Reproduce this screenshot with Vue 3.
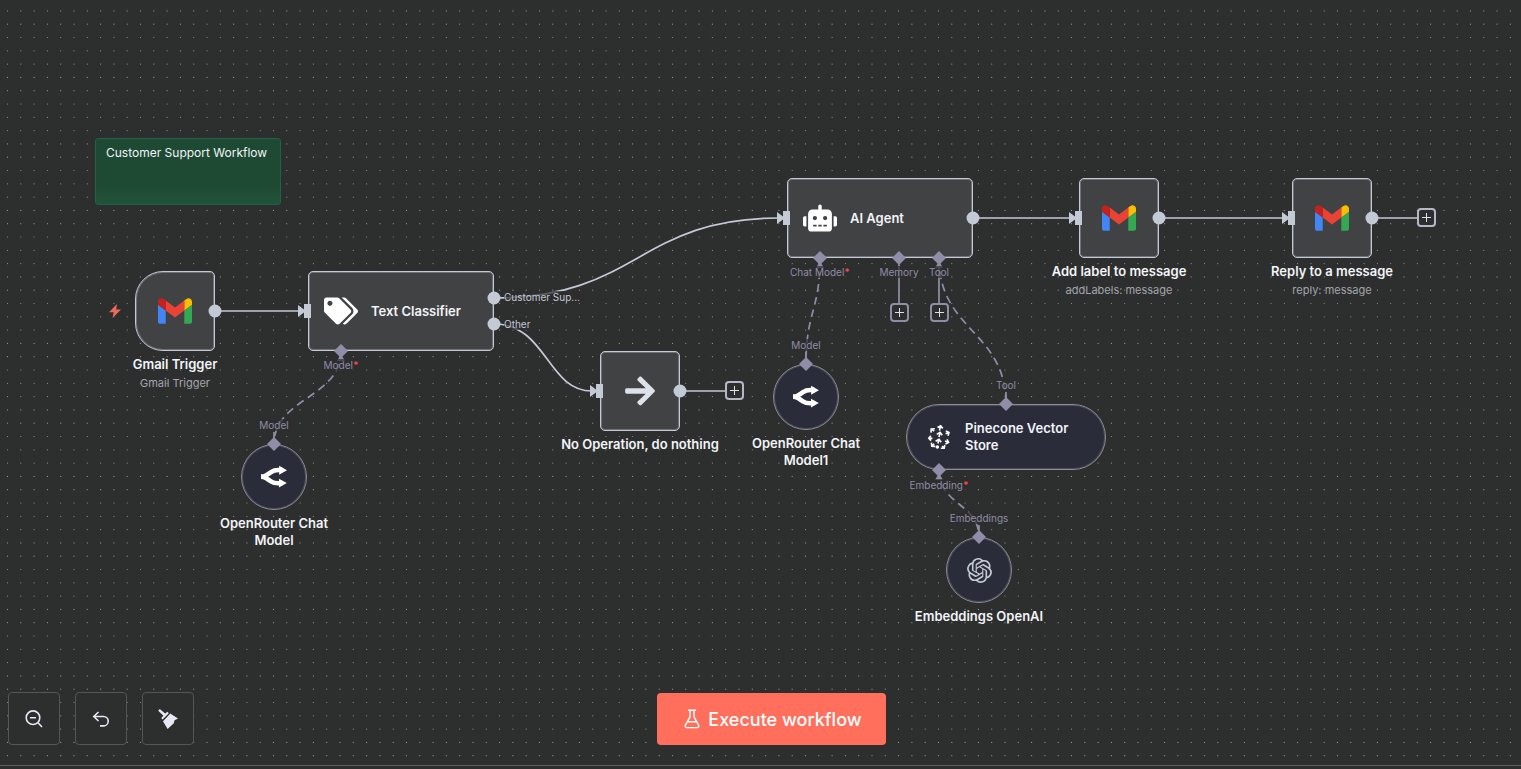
<script setup>
const nodes = [
  { id: 'gmail-trigger', x: 135, y: 271, kind: 'main trigger', icon: 'gmail', title: 'Gmail Trigger', sub: 'Gmail Trigger' },
  { id: 'noop', x: 600, y: 351, kind: 'main', icon: 'arrow', title: 'No Operation, do nothing' },
  { id: 'add-label', x: 1079, y: 178, kind: 'main', icon: 'gmail', title: 'Add label to message', sub: 'addLabels: message' },
  { id: 'reply', x: 1292, y: 178, kind: 'main', icon: 'gmail', title: 'Reply to a message', sub: 'reply: message' },
  { id: 'classifier', x: 308, y: 271, kind: 'main wide', icon: 'tags', title: 'Text Classifier', inside: true },
  { id: 'agent', x: 787, y: 178, kind: 'main wide', icon: 'robot', title: 'AI Agent', inside: true },
  { id: 'router', x: 241, y: 444, kind: 'round', icon: 'router', title: 'OpenRouter Chat Model' },
  { id: 'router1', x: 773, y: 364, kind: 'round', icon: 'router', title: 'OpenRouter Chat Model1' },
  { id: 'pinecone', x: 906, y: 404, kind: 'pill', icon: 'pinecone', title: 'Pinecone Vector Store', inside: true },
  { id: 'embeddings', x: 946, y: 537, kind: 'round', icon: 'openai', title: 'Embeddings OpenAI' },
]

const edges = [
  'M215 311H300',
  'M494 298C638 298 638 218 779 218',
  'M494 324C547 324 547 391 592 391',
  'M973 218H1071',
  'M1159 218H1284',
  'M680 391H726',
  'M1372 218H1417',
]
const dashed = [
  'M341 351C341 398 274 398 274 444',
  'M820 258C820 311 806 311 806 364',
  'M939 258C939 331 1006 331 1006 404',
  'M939 471C939 504 979 504 979 537',
]
const stems = ['M899 258V303', 'M939 258V303', 'M274 432V444', 'M806 352V364', 'M1006 392V404', 'M979 525V537']
const outputs = [[215, 311], [494, 298], [494, 324], [680, 391], [973, 218], [1159, 218], [1372, 218]]
const inputs = [[308, 311], [600, 391], [787, 218], [1079, 218], [1292, 218]]
const diamonds = [[341, 351], [274, 444], [820, 258], [899, 258], [939, 258], [806, 364], [1006, 404], [939, 470], [979, 537]]
const caps = [[341, 351], [820, 258], [939, 258], [939, 470]]

const labels = [
  { x: 341, y: 365, text: 'Model', required: true },
  { x: 274, y: 425, text: 'Model' },
  { x: 820, y: 272, text: 'Chat Model', required: true },
  { x: 899, y: 272, text: 'Memory' },
  { x: 939, y: 272, text: 'Tool' },
  { x: 806, y: 345, text: 'Model' },
  { x: 1006, y: 385, text: 'Tool' },
  { x: 939, y: 485, text: 'Embedding', required: true },
  { x: 979, y: 518, text: 'Embeddings' },
]
const branches = [
  { x: 504, y: 297, text: 'Customer Sup...' },
  { x: 504, y: 324, text: 'Other' },
]
const adders = [
  { x: 725, y: 381, name: 'Add after No Operation' },
  { x: 1417, y: 208, name: 'Add after Reply' },
  { x: 890, y: 303, name: 'Add memory', muted: true },
  { x: 930, y: 303, name: 'Add tool', muted: true },
]
const steps = [...Array(10).keys()]
const at = (p) => ({ left: p.x + 'px', top: p.y + 'px' })
</script>

<template>
  <div class="page">
    <main class="canvas">
      <svg class="layer" aria-hidden="true">
        <defs>
          <pattern id="dots" width="133" height="133" patternUnits="userSpaceOnUse">
            <template v-for="r in steps" :key="r">
              <circle v-for="c in steps" :key="c" :cx="7.5 + 13.3 * c" :cy="10.9 + 13.3 * r" r="0.6" fill="#8e9093" />
            </template>
          </pattern>
        </defs>
        <rect width="100%" height="100%" fill="url(#dots)" />
      </svg>

      <section class="sticky"><p>Customer Support Workflow</p></section>

      <svg class="layer" aria-hidden="true">
        <g class="edge">
          <path v-for="d in edges" :key="d" :d="d" />
        </g>
        <g class="edge muted">
          <path v-for="d in dashed" :key="d" class="dash" :d="d" />
          <path v-for="d in stems" :key="d" :d="d" />
        </g>
      </svg>

      <svg class="bolt" viewBox="0 0 12 14" aria-hidden="true"><path d="M8 0L0 8.200h4.600L3.600 14L12 5.400H7.200z" /></svg>

      <article v-for="n in nodes" :key="n.id" class="node" :class="n.kind" :style="at(n)">
        <div class="box">
          <svg v-if="n.icon === 'gmail'" class="i-gmail" viewBox="52 42 88 66">
            <path fill="#4285f4" d="M58 108h14V74L52 59v43c0 3.320 2.690 6 6 6" />
            <path fill="#34a853" d="M120 108h14c3.320 0 6-2.690 6-6V59l-20 15" />
            <path fill="#fbbc04" d="M120 48v26l20-15v-8c0-7.420-8.470-11.650-14.400-7.200" />
            <path fill="#ea4335" d="M72 74V48l24 18 24-18v26L96 92" />
            <path fill="#c5221f" d="M52 51v8l20 15V48l-5.600-4.200c-5.940-4.450-14.400-.22-14.400 7.200" />
          </svg>
          <svg v-else-if="n.icon === 'tags'" class="i-wide" viewBox="0 0 640 512"><path d="M497.941 225.941L286.059 14.059A48 48 0 0 0 252.118 0H48C21.490 0 0 21.490 0 48v204.118a48 48 0 0 0 14.059 33.941l211.882 211.882c18.744 18.745 49.136 18.746 67.882 0l204.118-204.118c18.745-18.745 18.745-49.137 0-67.882zM112 160c-26.510 0-48-21.490-48-48s21.490-48 48-48 48 21.490 48 48-21.490 48-48 48zm513.941 133.823L421.823 497.941c-18.745 18.745-49.137 18.745-67.882 0l-.36-.36L527.640 323.522c16.999-16.999 26.360-39.600 26.360-63.640s-9.362-46.641-26.360-63.640L331.397 0h48.721a48 48 0 0 1 33.941 14.059l211.882 211.882c18.745 18.745 18.745 49.137 0 67.882z" /></svg>
          <svg v-else-if="n.icon === 'robot'" class="i-wide" viewBox="0 0 640 512"><path d="M32 224H64V416H32A32 32 0 0 1 0 384V256A32 32 0 0 1 32 224Zm512-48V448a64 64 0 0 1-64 64H160a64 64 0 0 1-64-64V176a80 80 0 0 1 80-80H288V32a32 32 0 0 1 64 0V96H464A80 80 0 0 1 544 176ZM264 256a40 40 0 1 0-40 40A40 40 0 0 0 264 256Zm-8 128H192v32h64Zm96 0H288v32h64ZM456 256a40 40 0 1 0-40 40A40 40 0 0 0 456 256Zm-8 128H384v32h64ZM640 256V384a32 32 0 0 1-32 32H576V224h32A32 32 0 0 1 640 256Z" /></svg>
          <svg v-else-if="n.icon === 'arrow'" class="i-arrow" viewBox="0 0 448 512"><path d="M190.500 66.900l22.200-22.200c9.400-9.400 24.600-9.400 33.900 0L441 239c9.400 9.400 9.400 24.600 0 33.900L246.600 467.300c-9.400 9.400-24.600 9.400-33.900 0l-22.200-22.200c-9.500-9.500-9.300-25 .4-34.300L311.400 296H24c-13.300 0-24-10.700-24-24v-32c0-13.300 10.700-24 24-24h287.400L190.900 101.200c-9.800-9.300-10-24.800-.4-34.300z" /></svg>
          <svg v-else-if="n.icon === 'router'" class="i-router" viewBox="0 0 512 512">
            <path class="line" d="M3 249C18 249 76 236 106 219C136 202 136 202 198 158C276 102 332 121 423 121M0 249C15 249 73 262 103 279C133 296 133 296 195 340C273 396 329 377 420 377" />
            <path d="M511 121.500L357 210V33ZM508 376.500L354 288V465Z" />
          </svg>
          <svg v-else-if="n.icon === 'pinecone'" class="i-pinecone" viewBox="0 0 22 24">
            <path d="M11.500 5.500L12.500 0.800M9.500 2.500L12.700 0.800L14.800 3.400M11 12L12 7.600M8.800 9.400L12.100 7.400L14.200 10.300M10 18.500L10.800 14.600M7.600 16.300L11 14.200L13.200 17.200M6.200 6.200L3.400 4.200M3 7.600L3.200 4L6.800 3.800M4.400 13.400L1 13.200M2.800 10.800L0.800 13.200L3 15.600M6.200 18.800L4 21M3.400 17.600L3.800 21.200L7.200 21.400M14.200 21L16 23M12.800 23.200L16.200 23.200L16.800 20M17 16L20.400 17.400M19 14.400L20.600 17.400L17.400 19M17.600 8.800L20.800 7.600M17.800 6L21 7.400L20 10.800" />
            <circle cx="9.300" cy="22" r="1" />
          </svg>
          <svg v-else class="i-openai" viewBox="0 0 24 24"><path d="M22.2819 9.8211a5.9847 5.9847 0 0 0-.5157-4.9108 6.0462 6.0462 0 0 0-6.5098-2.9A6.0651 6.0651 0 0 0 4.9807 4.1818a5.9847 5.9847 0 0 0-3.9977 2.9 6.0462 6.0462 0 0 0 .7427 7.0966 5.98 5.98 0 0 0 .511 4.9107 6.051 6.051 0 0 0 6.5146 2.9001A5.9847 5.9847 0 0 0 13.2599 24a6.0557 6.0557 0 0 0 5.7718-4.2058 5.9894 5.9894 0 0 0 3.9977-2.9001 6.0557 6.0557 0 0 0-.7475-7.0729zm-9.022 12.6081a4.4755 4.4755 0 0 1-2.8764-1.0408l.1419-.0804 4.7783-2.7582a.7948.7948 0 0 0 .3927-.6813v-6.7369l2.02 1.1686a.071.071 0 0 1 .038.052v5.5826a4.504 4.504 0 0 1-4.4945 4.4944zm-9.6607-4.1254a4.4708 4.4708 0 0 1-.5346-3.0137l.142.0852 4.783 2.7582a.7712.7712 0 0 0 .7806 0l5.8428-3.3685v2.3324a.0804.0804 0 0 1-.0332.0615L9.74 19.9502a4.4992 4.4992 0 0 1-6.1408-1.6464zM2.3408 7.8956a4.485 4.485 0 0 1 2.3655-1.9728V11.6a.7664.7664 0 0 0 .3879.6765l5.8144 3.3543-2.0201 1.1685a.0757.0757 0 0 1-.071 0l-4.8303-2.7865A4.504 4.504 0 0 1 2.3408 7.872zm16.5963 3.8558L13.1038 8.364 15.1192 7.2a.0757.0757 0 0 1 .071 0l4.8303 2.7913a4.4944 4.4944 0 0 1-.6765 8.1042v-5.6772a.79.79 0 0 0-.407-.667zm2.0107-3.0231l-.142-.0852-4.7735-2.7818a.7759.7759 0 0 0-.7854 0L9.409 9.2297V6.8974a.0662.0662 0 0 1 .0284-.0615l4.8303-2.7866a4.4992 4.4992 0 0 1 6.6802 4.66zM8.3065 12.863l-2.02-1.1638a.0804.0804 0 0 1-.038-.0567V6.0742a4.4992 4.4992 0 0 1 7.3757-3.4537l-.142.0805L8.704 5.459a.7948.7948 0 0 0-.3927.6813zm1.0976-2.3654l2.602-1.4998 2.6069 1.4998v2.9994l-2.5974 1.4997-2.6067-1.4997Z" /></svg>
          <h2 v-if="n.inside" class="title">{{ n.title }}</h2>
        </div>
        <h2 v-if="!n.inside" class="title">{{ n.title }}</h2>
        <p v-if="n.sub" class="sub">{{ n.sub }}</p>
      </article>

      <svg class="layer" aria-hidden="true">
        <g class="port">
          <circle v-for="p in outputs" :key="p.join()" :cx="p[0]" :cy="p[1]" r="6.500" />
          <template v-for="p in inputs" :key="p.join()">
            <rect :x="p[0] - 4" :y="p[1] - 7" width="7" height="14" />
            <path :d="`M${p[0] - 10} ${p[1] - 6}l8 6l-8 6z`" />
          </template>
        </g>
        <g class="port muted">
          <path v-for="p in diamonds" :key="p.join()" :d="`M${p[0]} ${p[1] - 7}l7 7l-7 7l-7-7z`" />
          <path v-for="p in caps" :key="'c' + p.join()" :d="`M${p[0]} ${p[1] + 3}l4 7h-8z`" />
        </g>
      </svg>

      <span v-for="l in labels" :key="l.x + '-' + l.y" class="label" :style="at(l)">{{ l.text }}<b v-if="l.required">*</b></span>
      <span v-for="l in branches" :key="l.text" class="label branch" :style="at(l)">{{ l.text }}</span>

      <button v-for="a in adders" :key="a.name" class="add" :class="{ muted: a.muted }" :aria-label="a.name" :style="at(a)">
        <svg viewBox="0 0 9 9"><path d="M4.500 0v9M0 4.500h9" /></svg>
      </button>

      <nav class="controls">
        <button aria-label="Zoom out">
          <svg viewBox="0 0 20 20"><circle cx="9" cy="8.700" r="6.800" /><path d="M14 13.700L18 18M6 8.700h6" /></svg>
        </button>
        <button aria-label="Undo">
          <svg viewBox="0 0 20 20"><path d="M7.500 3L2.800 7.500L7.500 12M3 7.500H12.500a4.700 4.700 0 0 1 0 9.400H9" /></svg>
        </button>
        <button aria-label="Tidy up">
          <svg class="solid" viewBox="0 0 20 20"><path d="M0.200 1.800L1.800 0L7.200 4.600L9.400 2.800L10.800 4.200L4.600 10.400L3.200 9L5.400 6.800ZM12.200 4.600L20 9.400L16.600 11.200L15.600 14.400L9.600 20L7.200 16L5 12.200L11.400 5.400Z" /></svg>
        </button>
      </nav>

      <div class="run">
        <button>
          <svg viewBox="0 0 16 20"><path d="M4 1.200h8M6 1.200v6.600L1.400 16.200a1.600 1.600 0 0 0 1.400 2.400h10.400a1.600 1.600 0 0 0 1.400-2.400L10 7.800V1.200M3.600 12.800h8.800" /></svg>
          <span>Execute workflow</span>
        </button>
      </div>
    </main>
    <footer class="panel"></footer>
  </div>
</template>

<style>
body {
  background: #2d2e2e;
}
</style>

<style scoped>
.page {
  display: flex;
  flex-direction: column;
  height: 100vh;
  overflow: hidden;
  font-family: Inter, "Liberation Sans", sans-serif;
  color: #f2f4f8;
}
.canvas {
  position: relative;
  flex: 1;
  background: #2d2e2e;
}
.panel {
  height: 3px;
  border-top: 1px solid #5a5b5c;
  background: #2d2e2e;
}
.layer {
  position: absolute;
  inset: 0;
  width: 100%;
  height: 100%;
  pointer-events: none;
}
.sticky {
  position: absolute;
  left: 95px;
  top: 138px;
  box-sizing: border-box;
  width: 186px;
  height: 67px;
  padding: 6px 10px;
  border: 1px solid #226144;
  border-radius: 3px;
  background: linear-gradient(#1e4a33 70%, #20533a);
}
.sticky p {
  margin: 0;
  font-size: 12px;
  line-height: 16px;
}
.edge {
  fill: none;
  stroke: #c3c9d5;
  stroke-width: 1.7px;
}
.edge.muted {
  stroke: #8f8da8;
}
.dash {
  stroke-dasharray: 8 5;
}
.port {
  fill: #c3c9d5;
}
.port.muted {
  fill: #8f8da8;
}
.bolt {
  position: absolute;
  left: 109px;
  top: 304px;
  width: 12px;
  height: 14px;
  fill: #ee6a5a;
}
.node {
  position: absolute;
  display: flex;
  flex-direction: column;
  align-items: center;
  width: 80px;
}
.box {
  box-sizing: border-box;
  display: flex;
  align-items: center;
  justify-content: center;
  flex: none;
  width: 100%;
  height: 80px;
  border: 1px solid #c3c9d5;
  border-radius: 5px;
  box-shadow: inset 0 0 0 1px rgba(195, 201, 213, 0.35);
  background: #414244;
}
.trigger .box {
  border-radius: 28px 5px 5px 28px;
}
.wide {
  width: 186px;
}
.wide .box,
.pill .box {
  justify-content: flex-start;
  gap: 13px;
  padding-left: 15px;
}
.round {
  width: 66px;
}
.round .box,
.pill .box {
  height: 66px;
  border-color: #8c8c92;
  border-radius: 33px;
  box-shadow: inset 0 0 0 1px rgba(140, 140, 146, 0.35);
  background: #2b2c3a;
}
.pill {
  width: 200px;
}
.pill .box {
  gap: 15px;
  padding-left: 21px;
}
.title {
  margin: 5px 0 0;
  font-size: 13px;
  font-weight: 600;
  line-height: 17px;
  text-align: center;
  white-space: nowrap;
}
.box .title {
  margin: 0;
  text-align: left;
}
.round .title {
  width: 132px;
  white-space: normal;
}
.pill .title {
  width: 120px;
  white-space: normal;
}
.sub {
  margin: 2px 0 0;
  font-size: 11px;
  line-height: 16px;
  color: #a3a5aa;
  white-space: nowrap;
}
.box svg {
  flex: none;
  fill: #ffffff;
}
.i-gmail {
  width: 34px;
  height: 26px;
}
.i-wide {
  width: 34px;
  height: 28px;
}
.box .i-arrow {
  width: 30px;
  height: 34px;
  fill: #dde1ec;
}
.i-router {
  width: 26px;
  height: 26px;
}
.i-router .line {
  fill: none;
  stroke: #ffffff;
  stroke-width: 90px;
}
.i-pinecone {
  width: 22px;
  height: 24px;
  overflow: visible;
  stroke: #ffffff;
  stroke-width: 1.6px;
}
.i-pinecone path {
  fill: none;
}
.box .i-openai {
  width: 25px;
  height: 25px;
  fill: #c3c9d5;
}
.label {
  position: absolute;
  transform: translate(-50%, -50%);
  font-size: 10px;
  line-height: 12px;
  color: #8f8da8;
  white-space: nowrap;
  background: rgba(45, 46, 46, 0.7);
}
.label b {
  color: #f04a50;
}
.label.branch {
  transform: translate(0, -50%);
  color: #c3c9d5;
}
.add {
  position: absolute;
  display: flex;
  align-items: center;
  justify-content: center;
  width: 19px;
  height: 19px;
  padding: 0;
  border: 2px solid #b4b9c5;
  border-radius: 4px;
  background: #2d2e2e;
}
.add.muted {
  border-color: #8f8da8;
}
.add svg {
  width: 9px;
  height: 9px;
  stroke: #dde1ec;
  stroke-width: 1px;
}
.controls {
  position: absolute;
  left: 8px;
  bottom: 20px;
  display: flex;
  gap: 15px;
}
.controls button {
  display: flex;
  align-items: center;
  justify-content: center;
  width: 52px;
  height: 53px;
  padding: 0;
  border: 1px solid #545556;
  border-radius: 4px;
  background: #2d2e2e;
}
.controls svg {
  width: 20px;
  height: 20px;
  fill: none;
  stroke: #e6e9f2;
  stroke-width: 1.6px;
}
.controls .solid {
  fill: #e6e9f2;
  stroke: none;
}
.run {
  position: absolute;
  left: 22px;
  right: 0;
  bottom: 20px;
  display: flex;
  justify-content: center;
  pointer-events: none;
}
.run button {
  display: flex;
  align-items: center;
  gap: 8px;
  height: 52px;
  padding: 0 24px 0 27px;
  border: 0;
  border-radius: 4px;
  background: #ff6f5c;
  color: #ffffff;
  font-family: inherit;
  font-size: 18px;
  font-weight: 500;
  pointer-events: auto;
}
.run svg {
  width: 16px;
  height: 20px;
  fill: none;
  stroke: #ffffff;
  stroke-width: 1.4px;
}
</style>
